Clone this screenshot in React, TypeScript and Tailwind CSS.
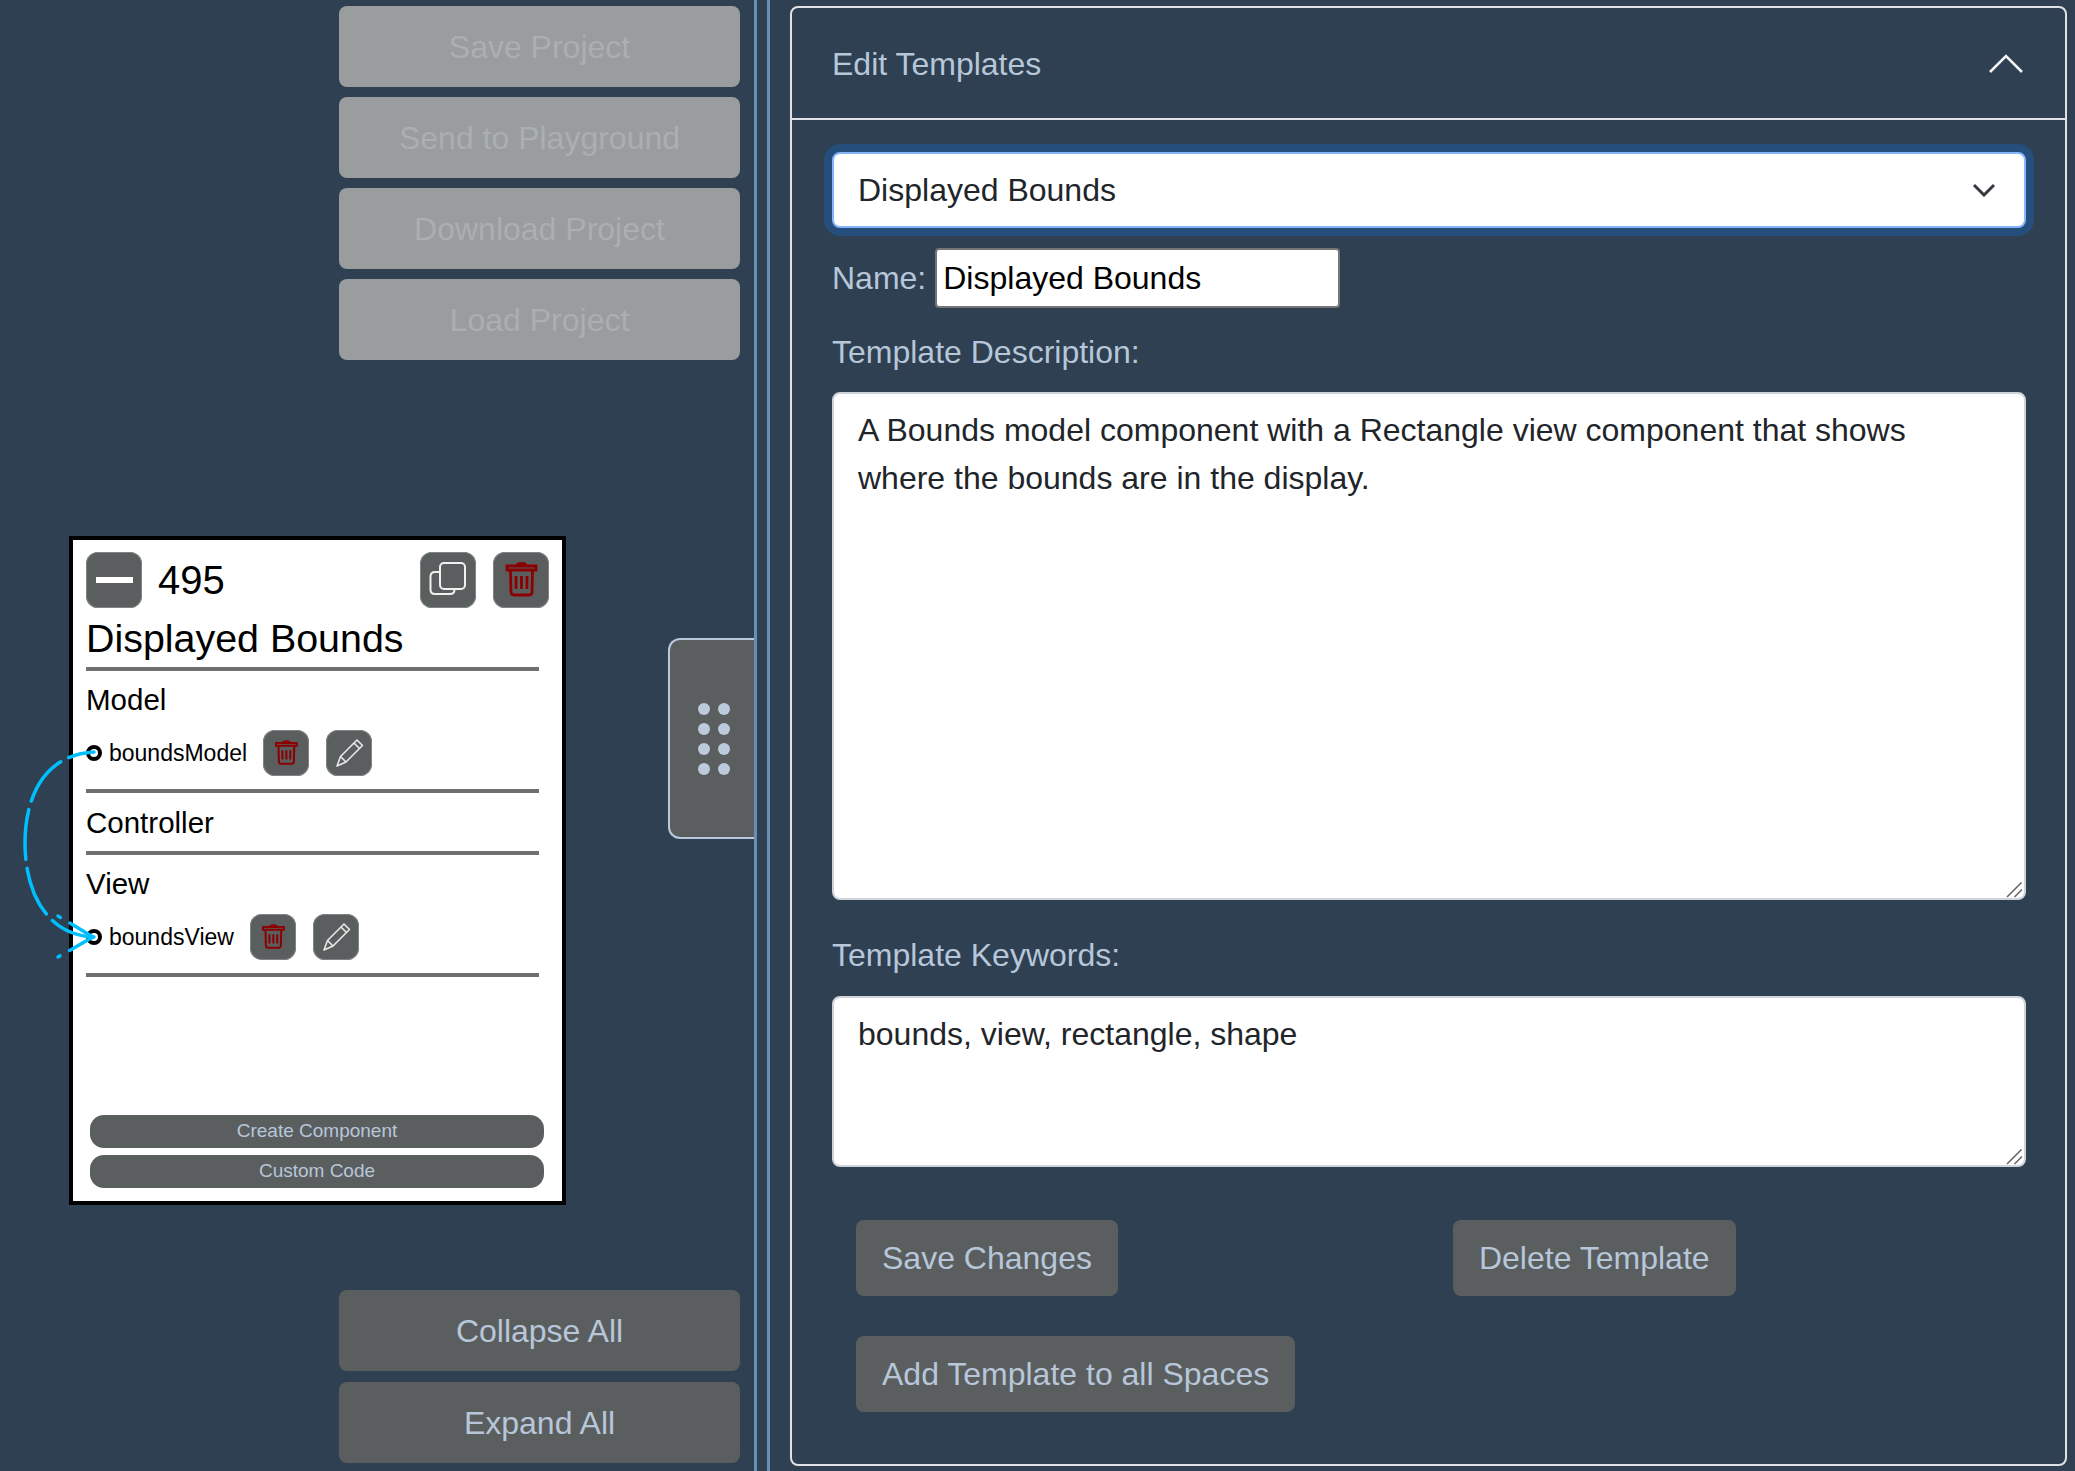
const btn = "rounded-lg bg-[#5a5e5f] text-[32px] leading-[48px] text-[#b7c6d9]";
const iconBox = "rounded-xl bg-[#5a5e5f] shadow-[inset_0_0_0_1px_#7f8384]";

function TrashIcon({ size }: { size: number }) {
  return (
    <svg width={size} height={size} viewBox="0 0 56 56" fill="none" stroke="#8b0000" strokeWidth="2.800">
      <path d="M14 14h29v4H14z" />
      <path d="M24 14c0-2 1-2.500 4.500-2.500s4.500 .5 4.500 2.500" />
      <path d="M17.500 18l.5 22c.1 2 1 3 3 3h15c2 0 2.900-1 3-3l.5-22" />
      <path d="M23 24v13M28.500 24v13M34 24v13" />
    </svg>
  );
}

function PencilIcon() {
  return (
    <svg width="46" height="46" viewBox="0 0 46 46" fill="none" stroke="#e8e8e8" strokeWidth="1.600" strokeLinejoin="round">
      <path d="M11 36l3.500-9.500L31 10l5.500 5.500L20 32z" />
      <path d="M14.500 26.500L20 32M28 13l5.500 5.500" />
    </svg>
  );
}

function CopyIcon() {
  return (
    <svg width="56" height="56" viewBox="0 0 56 56" fill="none" stroke="#f0f0f0" strokeWidth="2">
      <rect x="20" y="11" width="25" height="26" rx="4" />
      <path d="M20 20h-5c-3 0-4.500 1.500-4.500 4.500v13c0 3 1.500 4.500 4.500 4.500h15c3 0 4.500-1.500 4.500-4.500" />
    </svg>
  );
}

function Port({ name }: { name: string }) {
  return (
    <div className="mt-[3px] flex h-[46px] items-center">
      <div className="h-4 w-4 rounded-full border-[4px] border-black" />
      <span className="ml-[7px] mr-4 text-[23px] text-black">{name}</span>
      <div className={`mr-[17px] flex h-[46px] w-[46px] items-center justify-center ${iconBox}`}>
        <TrashIcon size={40} />
      </div>
      <div className={`flex h-[46px] w-[46px] items-center justify-center ${iconBox}`}>
        <PencilIcon />
      </div>
    </div>
  );
}

function Rule() {
  return <div className="h-1 w-[453px] bg-[#6f6f6f]" />;
}

function ComponentCard() {
  return (
    <div className="absolute left-[69px] top-[536px] flex h-[669px] w-[497px] flex-col border-4 border-black bg-white px-[13px] pb-[13px] pt-3 text-black">
      <div className="flex h-14 items-center">
        <div className={`flex h-14 w-14 items-center justify-center ${iconBox}`}>
          <div className="h-[6px] w-[37px] bg-white" />
        </div>
        <span className="ml-4 text-[40px]">495</span>
        <div className="ml-auto flex gap-[17px]">
          <div className={`h-14 w-14 ${iconBox}`}>
            <CopyIcon />
          </div>
          <div className={`h-14 w-14 ${iconBox}`}>
            <TrashIcon size={56} />
          </div>
        </div>
      </div>
      <div className="h-[59px] pt-px text-[39.4px] leading-[59px]">Displayed Bounds</div>
      <Rule />
      <div className="h-14 pt-px text-[29.5px] leading-14">Model</div>
      <Port name="boundsModel" />
      <div className="mt-[13px]">
        <Rule />
      </div>
      <div className="h-[58px] pt-px text-[29.5px] leading-[58px]">Controller</div>
      <Rule />
      <div className="h-14 pt-px text-[29.5px] leading-14">View</div>
      <Port name="boundsView" />
      <div className="mt-[13px]">
        <Rule />
      </div>
      <div className="ml-1 mt-auto flex w-[454px] flex-col gap-[7px]">
        <div className="flex h-[33px] items-center justify-center rounded-[14px] bg-[#5a5e5f] text-[19px] text-[#b7c6d9]">
          Create Component
        </div>
        <div className="flex h-[33px] items-center justify-center rounded-[14px] bg-[#5a5e5f] text-[19px] text-[#b7c6d9]">
          Custom Code
        </div>
      </div>
    </div>
  );
}

function Handle() {
  return (
    <div className="absolute right-0 top-[638px] flex h-[201px] w-[86px] items-center justify-center rounded-l-xl border-2 border-r-0 border-[#b9c8dc] bg-[#5a5e5f] pl-1">
      <div className="grid grid-cols-2 gap-2">
        {[0, 1, 2, 3, 4, 5, 6, 7].map((i) => (
          <div key={i} className="h-3 w-3 rounded-full bg-[#bccadb]" />
        ))}
      </div>
    </div>
  );
}

function Connection() {
  return (
    <svg className="absolute left-0 top-0" width="120" height="1000" fill="none" stroke="#00bfff" strokeWidth="3.500" strokeLinecap="round">
      <path strokeDasharray="50 9" strokeDashoffset="24" d="M94 752C42 755 25 800 25 843C25 890 45 935 94 937" />
      <path strokeDasharray="27 11 7" d="M93 937L58 957" />
      <path strokeDasharray="27 11 7" d="M93 937L58 916" />
    </svg>
  );
}

function Grip() {
  return (
    <svg className="absolute bottom-0 right-0" width="20" height="20" fill="none" stroke="#6a6a6a" strokeWidth="1.600">
      <path d="M1 17L15.500 2.500M8.500 17L16 9.500" />
    </svg>
  );
}

function Area({ value, height }: { value: string; height: string }) {
  return (
    <div className={`relative ${height}`}>
      <textarea
        readOnly
        defaultValue={value}
        className="block h-full w-full resize-none rounded-lg border-2 border-[#ced4da] bg-white px-6 py-3 text-[32px] leading-[48px] text-[#212529] outline-none"
      />
      <Grip />
    </div>
  );
}

function SideButton({ label, disabled }: { label: string; disabled?: boolean }) {
  return disabled ? (
    <div className="flex h-[81px] items-center justify-center rounded-lg bg-[#999d9e] text-[32px] text-[#abafb0]">
      {label}
    </div>
  ) : (
    <div className={`flex h-[81px] items-center justify-center ${btn}`}>{label}</div>
  );
}

export default function App() {
  return (
    <div className="relative flex h-[1471px] w-[2075px] overflow-hidden bg-[#2e4051] font-['Liberation_Sans',sans-serif]">
      <div className="relative flex w-[754px] flex-col justify-between pb-2 pl-[339px] pr-[14px] pt-[6px]">
        <div className="flex flex-col gap-[10px]">
          <SideButton disabled label="Save Project" />
          <SideButton disabled label="Send to Playground" />
          <SideButton disabled label="Download Project" />
          <SideButton disabled label="Load Project" />
        </div>
        <div className="flex flex-col gap-[11px]">
          <SideButton label="Collapse All" />
          <SideButton label="Expand All" />
        </div>
        <Handle />
      </div>

      <div className="h-full w-4 border-x-[3px] border-[#6a8fb5]" />

      <div className="ml-5 mt-[6px] h-[1460px] w-[1277px] rounded-lg border-2 border-[#dee2e6]">
        <div className="flex h-[112px] items-center justify-between border-b-2 border-[#dee2e6] pl-10 pr-[42px] pt-[2px]">
          <span className="text-[32px] text-[#b7c6d9]">Edit Templates</span>
          <svg width="34" height="20" viewBox="0 0 34 20" fill="none" stroke="#f2f4f6" strokeWidth="2.500">
            <path d="M1 18L17 2l16 16" />
          </svg>
        </div>
        <div className="pl-10 pr-[39px] pt-[32px] text-[32px] leading-[48px] text-[#b7c6d9]">
          <div className="flex h-[76px] items-center justify-between rounded-lg border-2 border-[#86b7fe] bg-white pl-6 pr-7 text-[#212529] shadow-[0_0_0_8px_#254e7d]">
            <span>Displayed Bounds</span>
            <svg width="24" height="14" viewBox="0 0 24 14" fill="none" stroke="#343a40" strokeWidth="3">
              <path d="M2 2l10 10L22 2" />
            </svg>
          </div>
          <div className="mt-5 flex items-center gap-[9px]">
            <label>Name:</label>
            <input
              readOnly
              defaultValue="Displayed Bounds"
              className="h-[60px] w-[405px] rounded-[4px] border-2 border-[#757575] bg-white px-[6px] text-black outline-none"
            />
          </div>
          <div className="mb-4 mt-5">Template Description:</div>
          <Area
            height="h-[508px]"
            value="A Bounds model component with a Rectangle view component that shows where the bounds are in the display."
          />
          <div className="mb-[17px] mt-[31px]">Template Keywords:</div>
          <Area height="h-[171px]" value="bounds, view, rectangle, shape" />
          <div className="ml-6 mt-[53px] flex gap-[335px]">
            <button className={`border-2 border-transparent px-6 py-3 ${btn}`}>Save Changes</button>
            <button className={`border-2 border-transparent px-6 py-3 ${btn}`}>Delete Template</button>
          </div>
          <div className="ml-6 mt-10">
            <button className={`border-2 border-transparent px-6 py-3 ${btn}`}>Add Template to all Spaces</button>
          </div>
        </div>
      </div>

      <ComponentCard />
      <Connection />
    </div>
  );
}
